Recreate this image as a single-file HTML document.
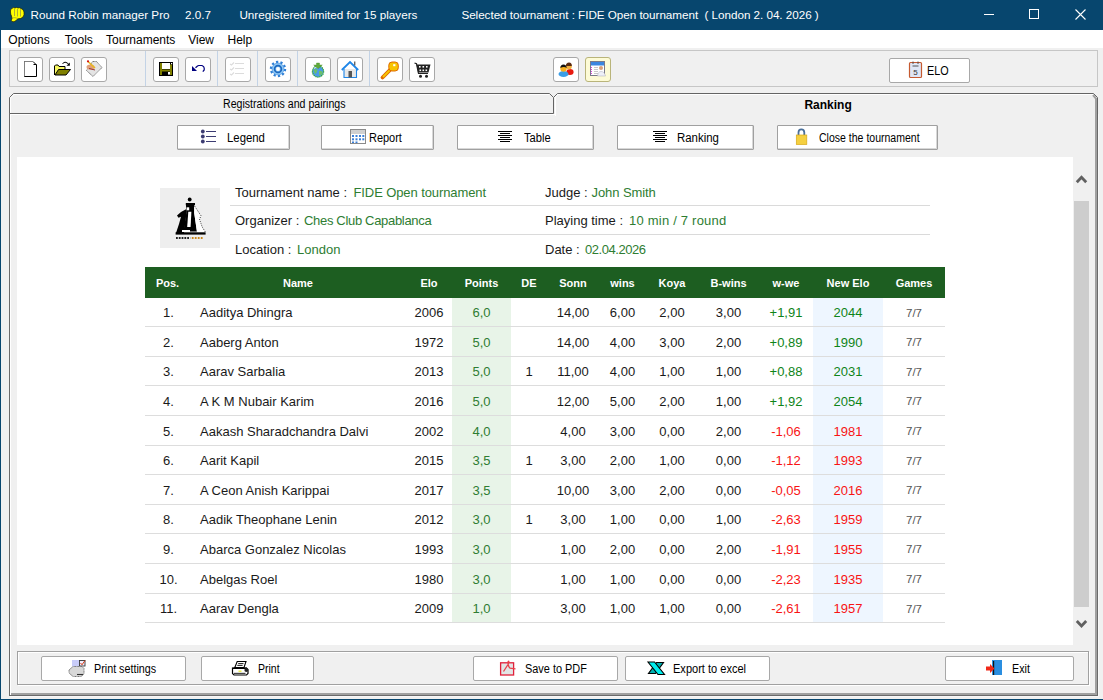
<!DOCTYPE html>
<html><head><meta charset="utf-8">
<style>
*{margin:0;padding:0;box-sizing:border-box}
html,body{width:1103px;height:700px;overflow:hidden;background:#f0f0f0;font-family:"Liberation Sans",sans-serif;position:relative}
.a{position:absolute}
.t{position:absolute;white-space:nowrap;line-height:1}
#title{left:0;top:0;width:1103px;height:30px;background:#07466e;color:#fff;font-size:11.7px}
#menu{left:1px;top:30px;width:1102px;height:18px;background:#fff;font-size:12px;color:#000}
.tb{position:absolute;top:57px;width:26px;height:25px;border:1px solid #a8a8a8;border-radius:3px;background:#fff}
.tsep{position:absolute;top:51px;width:1px;height:35px;background:#c3d3e6}
.btn{position:absolute;border:1px solid #a0a0a0;background:#fff;border-radius:1px;font-size:11px;color:#000;box-shadow:inset -1px -1px 0 #d8d8d8}
.btn2{position:absolute;border:1px solid #a8a8a8;background:#fff;border-radius:2px;font-size:11px;color:#000}
.bt{position:absolute;white-space:nowrap;line-height:1}
.ms{position:absolute;white-space:nowrap;line-height:1;font-size:12px;transform-origin:0 0;color:#000}
#grid{position:absolute;left:145px;top:267px;width:800px;border-collapse:collapse;table-layout:fixed;font-size:13px;color:#1a1a1a}
#grid th{height:31px;background:#1d5e21;color:#fff;font-weight:bold;font-size:11px;text-align:center;padding:0;vertical-align:middle}
#grid td{border-bottom:1px solid #dddddd;text-align:center;padding:2px 0 0 0;vertical-align:middle}
#grid tbody td:first-child{padding-left:2px}
#grid td.nm{text-align:left;padding-left:10px}
#grid td.pt{background:#e8f4e8;color:#2e7d32}
#grid td.ne{background:#eef6ff}
#grid td.g{font-size:11.5px;color:#555}
.gr{color:#0e8418}
.rd{color:#f81414}
.lbl{position:absolute;white-space:nowrap;font-size:13px;color:#1a1a1a;line-height:1}
.val{color:#2e7d32}
.lbl.val{color:#2e7d32}
</style></head><body>

<!-- title bar -->
<div id="title" class="a">
  <svg class="a" style="left:9px;top:6px" width="17" height="17" viewBox="0 0 17 17">
    <path d="M1.5 6 Q1 3 3 2.5 Q4 1 6 2 Q7.5 0.8 9 2 Q10.5 1.2 12 2.5 Q14.5 3 15 6 Q15.5 9 14 11 Q12 13 9 12.8 L7 14.5 Q5 16.5 3 15.5 Q1.5 14.5 3 12.5 L2.5 10 Q1.5 8.5 1.5 6 Z" fill="#ffff00" stroke="#202000" stroke-width="0.7"/>
    <path d="M5.5 3 V10 M8.5 3 V10.5 M11.5 3.2 V10.5" stroke="#9a9a40" stroke-width="0.8"/>
    <path d="M3 12 Q6 11 9 12.5" fill="none" stroke="#8a8a30" stroke-width="0.6"/>
  </svg>
  <span class="t" style="left:30.5px;top:9px">Round Robin manager Pro</span>
  <span class="t" style="left:185px;top:9px">2.0.7</span>
  <span class="t" style="left:239.4px;top:9px">Unregistered limited for 15 players</span>
  <span class="t" style="left:461.4px;top:9px;letter-spacing:-0.04px">Selected tournament : FIDE Open tournament&nbsp; ( London 2. 04. 2026 )</span>
  <div class="a" style="left:984px;top:14px;width:10px;height:1px;background:#fff"></div>
  <div class="a" style="left:1029px;top:9px;width:10px;height:10px;border:1px solid #fff"></div>
  <svg class="a" style="left:1075px;top:9px" width="11" height="11" viewBox="0 0 11 11"><path d="M0.5 0.5 L10.5 10.5 M10.5 0.5 L0.5 10.5" stroke="#fff" stroke-width="1.1"/></svg>
</div>
<div class="a" style="left:0;top:30px;width:1px;height:670px;background:#07466e"></div>
<div class="a" style="left:0;top:699px;width:1103px;height:1px;background:#07466e"></div>

<!-- menu -->
<div id="menu" class="a">
  <span class="t" style="left:7.3px;top:4px">Options</span>
  <span class="t" style="left:63.8px;top:4px">Tools</span>
  <span class="t" style="left:105px;top:4px">Tournaments</span>
  <span class="t" style="left:187.2px;top:4px">View</span>
  <span class="t" style="left:226.5px;top:4px">Help</span>
</div>

<!-- toolbar -->
<div class="a" style="left:9px;top:50px;width:1089px;height:37px;border:1px solid #c6c6c6"></div>
<div class="tsep" style="left:145px"></div>
<div class="tsep" style="left:217px"></div>
<div class="tsep" style="left:257px"></div>
<div class="tsep" style="left:297px"></div>
<div class="tsep" style="left:369px"></div>

<div class="tb" style="left:17px"></div>
<div class="tb" style="left:49px"></div>
<div class="tb" style="left:81px"></div>
<div class="tb" style="left:153px"></div>
<div class="tb" style="left:185px"></div>
<div class="tb" style="left:225px"></div>
<div class="tb" style="left:265px"></div>
<div class="tb" style="left:305px"></div>
<div class="tb" style="left:337px"></div>
<div class="tb" style="left:377px"></div>
<div class="tb" style="left:409px"></div>
<div class="tb" style="left:553px"></div>
<div class="tb" style="left:585px;background:#fdfbd6;border-color:#b9b47a"></div>
<div class="btn2" style="left:889px;top:58px;width:81px;height:25px"></div>
<span class="ms" style="left:926.6px;top:65px;transform:scaleX(0.9)">ELO</span>

<!-- tabs -->
<div class="a" style="left:9px;top:113px;width:1089px;height:583px;border-left:1px solid #6a6a6a;border-bottom:1px solid #6a6a6a;border-right:1px solid #6a6a6a;box-shadow:inset 1px 0 0 #fff, inset -2px -2px 0 #a0a0a0, 1px 1px 0 #f8f8f8"></div>
<svg class="a" style="left:0;top:90px" width="1103" height="30">
  <path d="M9.5 23.5 L9.5 7.5 L13.5 3.5 L549.5 3.5 L553.5 7.5 L553.5 23.5 L9.5 23.5" fill="#f0f0f0" stroke="#646464" stroke-width="1"/>
  <path d="M553.5 23.5 L553.5 7.5 L557.5 3.5 L1093.5 3.5 L1097.5 7.5 L1097.5 30" fill="#f0f0f0" stroke="#646464" stroke-width="1"/>
  <path d="M1096 30 L1096 8.5 L1093 5" fill="none" stroke="#a0a0a0" stroke-width="2"/>
  <g fill="#fff" shape-rendering="crispEdges">
    <rect x="10" y="8" width="1" height="15"/>
    <rect x="14" y="4" width="535" height="1"/>
    <rect x="558" y="4" width="535" height="1"/>
    <rect x="555" y="7" width="1" height="19"/>
    <rect x="10" y="24" width="546" height="1"/>
  </g>
  <path d="M10.5 8 L14 4.5 M554.8 7.5 L558 4.5" stroke="#fff" stroke-width="1"/>
</svg>
<span class="ms" style="left:222.6px;top:98px;transform:scaleX(0.883)">Registrations and pairings</span>
<span class="t" style="left:804.4px;top:99px;font-size:12px;font-weight:bold">Ranking</span>

<!-- action buttons -->
<div class="btn" style="left:177px;top:125px;width:113px;height:25px"></div>
<div class="btn" style="left:321px;top:125px;width:113px;height:25px"></div>
<div class="btn" style="left:457px;top:125px;width:137px;height:25px"></div>
<div class="btn" style="left:617px;top:125px;width:137px;height:25px"></div>
<div class="btn" style="left:777px;top:125px;width:161px;height:25px"></div>
<span class="ms" style="left:226.7px;top:132px;transform:scaleX(0.947)">Legend</span>
<span class="ms" style="left:369.4px;top:132px;transform:scaleX(0.914)">Report</span>
<span class="ms" style="left:524px;top:132px;transform:scaleX(0.929)">Table</span>
<span class="ms" style="left:676.8px;top:132px;transform:scaleX(0.952)">Ranking</span>
<span class="ms" style="left:818.6px;top:132px;transform:scaleX(0.877)">Close the tournament</span>

<!-- content -->
<div class="a" style="left:17px;top:157px;width:1056px;height:488px;background:#fff"></div>

<!-- info -->
<div class="a" style="left:230px;top:205px;width:700px;height:1px;background:#dadada"></div>
<div class="a" style="left:230px;top:234px;width:700px;height:1px;background:#dadada"></div>
<span class="lbl" style="left:235px;top:186px">Tournament name :</span><span class="lbl val" style="left:353.5px;top:186px;letter-spacing:-0.1px">FIDE Open tournament</span>
<span class="lbl" style="left:235px;top:214px">Organizer :</span><span class="lbl val" style="left:304px;top:214px;letter-spacing:-0.32px">Ches Club Capablanca</span>
<span class="lbl" style="left:235px;top:243px">Location :</span><span class="lbl val" style="left:297px;top:243px">London</span>
<span class="lbl" style="left:545px;top:186px">Judge :</span><span class="lbl val" style="left:591.6px;top:186px;letter-spacing:-0.1px">John Smith</span>
<span class="lbl" style="left:545px;top:214px">Playing time :</span><span class="lbl val" style="left:629px;top:214px;letter-spacing:0.22px">10 min / 7 round</span>
<span class="lbl" style="left:545px;top:243px">Date :</span><span class="lbl val" style="left:585px;top:243px;letter-spacing:-0.44px">02.04.2026</span>

<table id="grid">
<colgroup><col style="width:45px"><col style="width:216px"><col style="width:46px"><col style="width:59px"><col style="width:36px"><col style="width:52px"><col style="width:47px"><col style="width:52px"><col style="width:61px"><col style="width:54px"><col style="width:70px"><col style="width:62px"></colgroup>
<thead><tr><th>Pos.</th><th>Name</th><th>Elo</th><th>Points</th><th>DE</th><th>Sonn</th><th>wins</th><th>Koya</th><th>B-wins</th><th>w-we</th><th>New Elo</th><th>Games</th></tr></thead>
<tbody>
<tr style="height:28px"><td>1.</td><td class="nm">Aaditya Dhingra</td><td>2006</td><td class="pt">6,0</td><td></td><td>14,00</td><td>6,00</td><td>2,00</td><td>3,00</td><td class="gr">+1,91</td><td class="ne gr">2044</td><td class="g">7/7</td></tr>
<tr style="height:30px"><td>2.</td><td class="nm">Aaberg Anton</td><td>1972</td><td class="pt">5,0</td><td></td><td>14,00</td><td>4,00</td><td>3,00</td><td>2,00</td><td class="gr">+0,89</td><td class="ne gr">1990</td><td class="g">7/7</td></tr>
<tr style="height:29px"><td>3.</td><td class="nm">Aarav Sarbalia</td><td>2013</td><td class="pt">5,0</td><td>1</td><td>11,00</td><td>4,00</td><td>1,00</td><td>1,00</td><td class="gr">+0,88</td><td class="ne gr">2031</td><td class="g">7/7</td></tr>
<tr style="height:30px"><td>4.</td><td class="nm">A K M Nubair Karim</td><td>2016</td><td class="pt">5,0</td><td></td><td>12,00</td><td>5,00</td><td>2,00</td><td>1,00</td><td class="gr">+1,92</td><td class="ne gr">2054</td><td class="g">7/7</td></tr>
<tr style="height:30px"><td>5.</td><td class="nm">Aakash Sharadchandra Dalvi</td><td>2002</td><td class="pt">4,0</td><td></td><td>4,00</td><td>3,00</td><td>0,00</td><td>2,00</td><td class="rd">-1,06</td><td class="ne rd">1981</td><td class="g">7/7</td></tr>
<tr style="height:29px"><td>6.</td><td class="nm">Aarit Kapil</td><td>2015</td><td class="pt">3,5</td><td>1</td><td>3,00</td><td>2,00</td><td>1,00</td><td>0,00</td><td class="rd">-1,12</td><td class="ne rd">1993</td><td class="g">7/7</td></tr>
<tr style="height:30px"><td>7.</td><td class="nm">A Ceon Anish Karippai</td><td>2017</td><td class="pt">3,5</td><td></td><td>10,00</td><td>3,00</td><td>2,00</td><td>0,00</td><td class="rd">-0,05</td><td class="ne rd">2016</td><td class="g">7/7</td></tr>
<tr style="height:29px"><td>8.</td><td class="nm">Aadik Theophane Lenin</td><td>2012</td><td class="pt">3,0</td><td>1</td><td>3,00</td><td>1,00</td><td>0,00</td><td>1,00</td><td class="rd">-2,63</td><td class="ne rd">1959</td><td class="g">7/7</td></tr>
<tr style="height:30px"><td>9.</td><td class="nm">Abarca Gonzalez Nicolas</td><td>1993</td><td class="pt">3,0</td><td></td><td>1,00</td><td>2,00</td><td>0,00</td><td>2,00</td><td class="rd">-1,91</td><td class="ne rd">1955</td><td class="g">7/7</td></tr>
<tr style="height:30px"><td>10.</td><td class="nm">Abelgas Roel</td><td>1980</td><td class="pt">3,0</td><td></td><td>1,00</td><td>1,00</td><td>0,00</td><td>0,00</td><td class="rd">-2,23</td><td class="ne rd">1935</td><td class="g">7/7</td></tr>
<tr style="height:29px"><td>11.</td><td class="nm">Aarav Dengla</td><td>2009</td><td class="pt">1,0</td><td></td><td>3,00</td><td>1,00</td><td>1,00</td><td>0,00</td><td class="rd">-2,61</td><td class="ne rd">1957</td><td class="g">7/7</td></tr>
</tbody></table>




<!-- scrollbar -->
<div class="a" style="left:1074px;top:201px;width:15px;height:406px;background:#cdcdcd"></div>
<svg class="a" style="left:1075px;top:173px" width="13" height="12" viewBox="0 0 13 12"><path d="M1.8 9.2 L6.5 4.2 L11.2 9.2" fill="none" stroke="#606060" stroke-width="2.8"/></svg>
<svg class="a" style="left:1075px;top:618px" width="13" height="12" viewBox="0 0 13 12"><path d="M1.8 3 L6.5 8 L11.2 3" fill="none" stroke="#606060" stroke-width="2.8"/></svg>

<!-- bottom panel -->
<div class="a" style="left:17px;top:651px;width:1072px;height:34px;border:1px solid #a0a0a0;box-shadow:1px 1px 0 #fff, inset 1px 1px 0 #fff"></div>
<div class="btn2" style="left:41px;top:656px;width:145px;height:25px"></div>
<div class="btn2" style="left:201px;top:656px;width:113px;height:25px"></div>
<div class="btn2" style="left:473px;top:656px;width:145px;height:25px"></div>
<div class="btn2" style="left:625px;top:656px;width:145px;height:25px"></div>
<div class="btn2" style="left:945px;top:656px;width:129px;height:25px"></div>
<span class="ms" style="left:94.3px;top:663px;transform:scaleX(0.897)">Print settings</span>
<span class="ms" style="left:258px;top:663px;transform:scaleX(0.875)">Print</span>
<span class="ms" style="left:525.2px;top:663px;transform:scaleX(0.91)">Save to PDF</span>
<span class="ms" style="left:673.3px;top:663px;transform:scaleX(0.92)">Export to excel</span>
<span class="ms" style="left:1011.6px;top:663px;transform:scaleX(0.895)">Exit</span>

<!-- icons overlay -->
<svg class="a" style="left:0;top:0" width="1103" height="700" viewBox="0 0 1103 700" shape-rendering="auto">
 <!-- new doc -->
 <path d="M24.5 76.5 V61.5 H33 L36.5 65 V76.5 Z" fill="#fff" stroke="#000" stroke-width="1"/>
 <path d="M24.5 76 V61.5 H33" fill="none" stroke="#808080" stroke-width="1"/>
 <path d="M33.5 64.5 H36.5" stroke="#000" stroke-width="1"/>
 <!-- open folder -->
 <path d="M54.5 75 V66 L55.5 65 H58 L59 66.5 H65 V69.5" fill="#f8f860" stroke="#000" stroke-width="1"/>
 <path d="M55 75 L58.5 69.5 H70.5 L66 75 Z" fill="#808000" stroke="#000" stroke-width="1"/>
 <path d="M62.5 63.5 Q65 61 67.5 63 L68.5 64.5" stroke="#000" fill="none" stroke-width="1"/>
 <path d="M66.5 65.8 L69.8 65.8 L69.8 62.5 Z" fill="#000"/>
 <!-- doc with pen -->
 <path d="M86.5 70.5 L92.5 61.5 H96.5 L102 67.5 L93 76.5 Z" fill="#e4e4e4" stroke="#666" stroke-width="1" stroke-dasharray="1 0.6"/>
 <ellipse cx="90.5" cy="67" rx="4" ry="2.6" fill="#dfa07a"/>
 <path d="M88 61.5 L95 68" stroke="#e8b820" stroke-width="1.6"/>
 <circle cx="88" cy="61.3" r="1.1" fill="#d01010"/>
 <path d="M89 68.5 L95 70" stroke="#902020" stroke-width="0.9"/>
 <!-- floppy -->
 <rect x="159" y="62" width="14" height="14" fill="#000"/>
 <rect x="160" y="63" width="2" height="12" fill="#808000"/>
 <rect x="170" y="64.5" width="2" height="10.5" fill="#808000"/>
 <rect x="160" y="69.5" width="12" height="2" fill="#808000"/>
 <rect x="162" y="63" width="8" height="6" fill="#fff"/>
 <rect x="168" y="72" width="2" height="2.6" fill="#fff"/>
 <rect x="171" y="63" width="1.2" height="1.2" fill="#fff"/>
 <!-- undo -->
 <path d="M192 66 V71 H197 Z" fill="#000080"/>
 <path d="M195.5 67.8 L197.5 66 L198.7 65.5 H202 L203.6 66.6 L204.2 68 V70 L202.8 71.6" fill="none" stroke="#000080" stroke-width="1.2"/>
 <!-- disabled list -->
 <g stroke="#dcdcdc" stroke-width="1.1" fill="none">
  <path d="M235 63.5 H244 M235 68.5 H244 M235 73.5 H244"/>
  <path d="M230 64 L231.5 65 L234 62.5 M230 69 L231.5 70 L234 67.5 M230 74 L231.5 75 L234 72.5"/>
 </g>
 <!-- gear -->
 <circle cx="278" cy="69" r="7" fill="none" stroke="#2f7fd6" stroke-width="2.4" stroke-dasharray="2.2 2.2"/>
 <circle cx="278" cy="69" r="6" fill="#8fc8f4" stroke="#3a88dc" stroke-width="0.6"/>
 <circle cx="278" cy="69" r="3.4" fill="none" stroke="#1c68c0" stroke-width="1.7"/>
 <circle cx="278" cy="69" r="1.9" fill="#fff"/>
 <!-- globe -->
 <circle cx="318" cy="71.5" r="5.6" fill="#4a9ae8" stroke="#2aa02a" stroke-width="1.2" stroke-dasharray="1.3 0.7"/>
 <path d="M313.5 70 Q315.5 68 317.5 70 Q317 73 315 74 Z M319 71 Q322 70 323 73 Q321 76 319 75 Z" fill="#6cc06c"/>
 <path d="M313.8 68.5 Q316 66.5 318 68" fill="none" stroke="#e8f4e8" stroke-width="1"/>
 <path d="M316.5 63 H319.5 V65 H322.3 L318 68.8 L313.7 65 H316.5 Z" fill="#5faa3a" stroke="#4a8a2a" stroke-width="0.4"/>
 <!-- home -->
 <path d="M344 69 V77.5 H356.5 V69" fill="#e8e8e8" stroke="#1f86e8" stroke-width="1.1"/>
 <path d="M341.8 70 L350 62 L358.2 70" fill="none" stroke="#1f86e8" stroke-width="1.8"/>
 <rect x="354" y="61.5" width="1.4" height="4" fill="#666"/>
 <rect x="348.5" y="71" width="3.5" height="6.5" fill="#555"/>
 <!-- key -->
 <path d="M390.8 69.2 L382.5 77.5" stroke="#e06a00" stroke-width="3.8" stroke-linecap="round"/>
 <path d="M390.8 69.2 L383 77" stroke="#f8c800" stroke-width="1.8"/>
 <rect x="388.8" y="62" width="9.5" height="9" rx="3.2" fill="#f8c400" stroke="#e06a00" stroke-width="1"/>
 <rect x="393.2" y="64.2" width="2.2" height="2" fill="#fff"/>
 <!-- cart -->
 <path d="M414.5 63 L416.5 63.8 L418.5 73.5 H428" fill="none" stroke="#222" stroke-width="1.2"/>
 <path d="M416.5 64.5 H430.5 L428.5 72.5 H418 Z" fill="#222"/>
 <g fill="#fff"><rect x="419" y="66" width="1.6" height="1.6"/><rect x="422.5" y="66" width="1.6" height="1.6"/><rect x="426" y="66" width="1.6" height="1.6"/><rect x="419.5" y="69.5" width="1.6" height="1.6"/><rect x="422.5" y="69.5" width="1.6" height="1.6"/><rect x="425.5" y="69.5" width="1.6" height="1.6"/></g>
 <circle cx="420.5" cy="76.3" r="1.5" fill="#222"/><circle cx="426.5" cy="76.3" r="1.5" fill="#222"/>
 <!-- people -->
 <ellipse cx="570" cy="72" rx="3.6" ry="3" fill="#e81a10"/>
 <circle cx="568.8" cy="66.5" r="3" fill="#f0b040"/>
 <path d="M565.8 66 Q566 62.5 569 62.5 Q572 62.8 571.8 66" fill="#5a2a10"/>
 <ellipse cx="563.5" cy="74" rx="5" ry="3" fill="#3a9ee8"/>
 <circle cx="563.5" cy="68.5" r="3.2" fill="#f7b020"/>
 <path d="M560.3 68 Q560.5 64.5 563.5 64.5 Q566.5 64.5 566.7 68 Q564 66 560.3 68" fill="#111"/>
 <!-- card -->
 <rect x="590.5" y="61.5" width="14" height="14" fill="#fff" stroke="#7a7a8a" stroke-width="1"/>
 <rect x="591" y="62" width="13" height="3.5" fill="#3a86e0"/>
 <g fill="#e040e0"><rect x="591" y="67" width="1" height="1"/><rect x="591" y="69" width="1" height="1"/><rect x="591" y="71" width="1" height="1"/><rect x="591" y="73" width="1" height="1"/></g>
 <g stroke="#b0b0b0" stroke-width="0.7"><path d="M594 67.5 H598 M594 69.5 H598 M594 71.5 H598 M594 73.5 H598"/></g>
 <circle cx="601" cy="68" r="2" fill="#d9a07a"/>
 <path d="M597.5 76 Q598 71.5 601 71.5 Q604.5 71.5 605.5 76 Z" fill="#eef0f8" stroke="#aab" stroke-width="0.5"/>
 <!-- ELO calendar -->
 <rect x="909.5" y="62.5" width="12" height="15" rx="1" fill="#dfe6f5" stroke="#c65a30" stroke-width="1.2"/>
 <path d="M913 61.5 V64 M918 61.5 V64" stroke="#444" stroke-width="0.9"/>
 <path d="M912.5 66 H918.5" stroke="#444" stroke-width="0.9"/>
 <text x="915.5" y="75" font-family="Liberation Sans" font-size="8" text-anchor="middle" fill="#333">5</text>
 <!-- legend icon -->
 <g fill="#3c3c72"><circle cx="202.8" cy="131.5" r="1.9"/><circle cx="202.8" cy="136.5" r="1.9"/><circle cx="202.8" cy="141.5" r="1.9"/></g>
 <path d="M206 131.5 H216 M206 136.5 H216 M206 141.5 H216" stroke="#3c3c72" stroke-width="1.1"/>
 <!-- report icon -->
 <rect x="350.5" y="129.5" width="15" height="14" fill="#fff" stroke="#8a8a8a" stroke-width="1"/>
 <rect x="351" y="130" width="14" height="4" fill="#d0d0d0"/>
 <g fill="#3a7fd8"><rect x="352" y="135" width="2" height="2"/><rect x="355.5" y="135" width="2" height="2"/><rect x="359" y="135" width="2" height="2"/><rect x="362.3" y="135" width="2" height="2"/><rect x="352" y="138.3" width="2" height="2"/><rect x="355.5" y="138.3" width="2" height="2"/><rect x="359" y="138.3" width="2" height="2"/><rect x="362.3" y="138.3" width="2" height="2"/><rect x="352" y="141.5" width="2" height="1.5"/><rect x="355.5" y="141.5" width="2" height="1.5"/></g>
 <!-- table icon -->
 <path d="M498 131.5 H512 M500 133.5 H510 M498 135.5 H512 M500 137.5 H510 M498 139.5 H512 M500 141.5 H510" stroke="#000" stroke-width="1.1"/>
 <!-- ranking icon -->
 <path d="M653 131.5 H667 M655 133.5 H665 M653 135.5 H667 M655 137.5 H665 M653 139.5 H667 M655 141.5 H665" stroke="#000" stroke-width="1.1"/>
 <!-- lock -->
 <path d="M798.5 136 V132.5 Q798.5 129.3 801.3 129.3 Q804.3 129.3 804.3 132.5 V136" fill="none" stroke="#4a6f9a" stroke-width="1.8"/>
 <rect x="796.3" y="135" width="10.5" height="9.5" fill="#f5d040" stroke="#d8a818" stroke-width="0.7"/>
 <!-- print settings -->
 <rect x="72" y="660" width="7" height="6.5" fill="#c8ccf8"/>
 <rect x="79.5" y="660.5" width="5.5" height="5.5" fill="#eef" stroke="#333" stroke-width="0.9"/>
 <path d="M80.5 663 L82 664.8 L85 660.5" fill="none" stroke="#d83a10" stroke-width="1"/>
 <path d="M69 670 L73 666.5 H82 L84 668.5 V674 L81 676.5 H73 L69 673 Z" fill="#d8d8d8" stroke="#555" stroke-width="0.8" stroke-dasharray="1 0.5"/>
 <path d="M77 674.5 H83" stroke="#333" stroke-width="1.1"/>
 <!-- print -->
 <path d="M237.2 661.5 H246 L244 667.5 H234.8 Z" fill="#fff" stroke="#000" stroke-width="1.1"/>
 <path d="M238.2 663.6 H243.5 M237.3 665.4 H242.6" stroke="#000" stroke-width="0.9"/>
 <path d="M232.5 668 H246.5 L248 669.5 V673.5 L246.5 675 H234 L232.5 673.5 Z" fill="#fff" stroke="#000" stroke-width="1.2"/>
 <path d="M232.5 668.3 H247" stroke="#000" stroke-width="1.4"/>
 <path d="M234 673.4 H245.5" stroke="#444" stroke-width="1.2"/>
 <circle cx="246.3" cy="670" r="1.9" fill="#222"/>
 <rect x="238.5" y="670.6" width="3" height="1.1" fill="#e8e800"/>
 <!-- pdf -->
 <rect x="500.6" y="662.8" width="13" height="12.2" fill="#e2e6e6" stroke="#e0203a" stroke-width="1.3"/>
 <path d="M503.5 671.5 L508 664.5 Q509.5 660 508.2 661.5 Q507.5 663 509 667 L510 668.2 L515.5 668.8" fill="none" stroke="#e8404a" stroke-width="1.3"/>
 <!-- excel -->
 <path d="M656.5 662.5 H663.5 L655.5 673.5 H648.5 Z" fill="#00b0b0" stroke="#000" stroke-width="1.1"/>
 <path d="M648 662 H654.5 L664.5 674.5 H658 Z" fill="#00ecec" stroke="#000" stroke-width="1.1"/>
 <!-- exit -->
 <rect x="992" y="660" width="10" height="15" fill="#2a8ee0"/>
 <rect x="993" y="661" width="1.2" height="14" fill="#111"/>
 <path d="M986 666.5 H990 V664 L994.5 668.5 L990 673 V670.5 H986 Z" fill="#f02818"/>
 <!-- logo -->
 <rect x="160" y="188" width="60" height="60" fill="#eeeeee"/>
 <circle cx="189.7" cy="199.5" r="1.9" fill="#000"/>
 <rect x="185.8" y="203" width="9.2" height="2.2" fill="#000"/>
 <path d="M186 205 H194.2 V213 L197 231.5 H183.5 L186.3 213 Z" fill="#000"/>
 <path d="M186.5 209 L181 212 L177 215.5 L178.5 217.8 L181 216.8 L179 224 L176 233 H184 L186.5 213 Z" fill="#000"/>
 <rect x="186.6" y="207.3" width="2.6" height="3" fill="#fff"/>
 <path d="M188.3 211.8 H191.4 L190.6 227 H187.2 Z" fill="#fff"/>
 <rect x="182" y="230" width="8" height="2" fill="#fff"/>
 <path d="M194.2 206 L197.2 210 L201 215.8 L199.5 219.2 L202.2 227 L205.6 232.4 L197 232.4 L194.2 213 Z" fill="#fff" stroke="none"/>
 <path d="M194.6 206 L197.2 210 L201 215.8 L199.5 219.2 L202.2 227 L205.6 232.4" fill="none" stroke="#111" stroke-width="0.9" stroke-dasharray="0.9 1.3"/>
 <rect x="175.6" y="232.3" width="30" height="2.3" fill="#000"/>
 <path d="M176 238 H190.2" stroke="#222" stroke-width="2" stroke-dasharray="1.8 1"/>
 <path d="M191.8 238 H203.2" stroke="#c8861a" stroke-width="2" stroke-dasharray="1.8 1.2"/>
</svg>
</body></html>
